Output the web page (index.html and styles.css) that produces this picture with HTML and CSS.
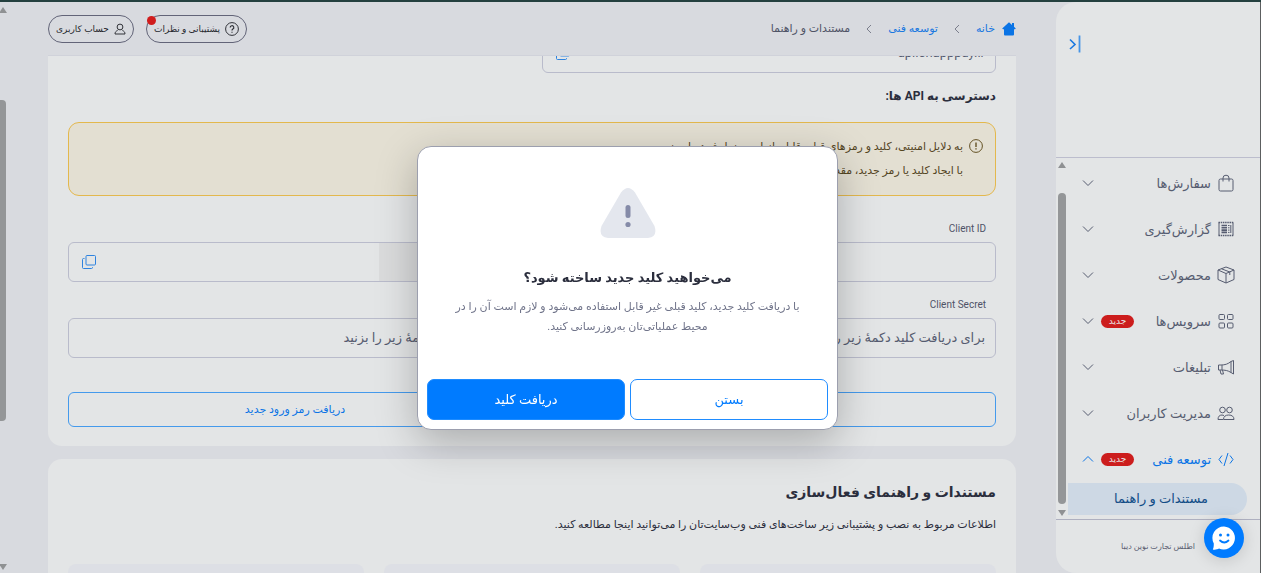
FILE: index.html
```html
<!DOCTYPE html>
<html lang="fa" dir="rtl">
<head>
    <meta charset="UTF-8">
    <meta name="viewport" content="width=device-width, initial-scale=1.0">
    <title>مستندات و راهنما</title>
    <link rel="stylesheet" href="styles.css">
</head>
<body>

<div class="app">
    <aside class="sidebar">
        <div class="sidebar-head">
            <button class="collapse" aria-label="بستن منو">
                <svg width="12" height="18" viewBox="0 0 12 18"><path d="M1 4.500L6 9.500L1 14" fill="none" stroke="#1a78e0" stroke-width="1.600"/><path d="M10.500 0.500V17.500" stroke="#4594e6" stroke-width="1.800"/></svg>
            </button>
        </div>

        <div class="sidebar-body">
            <nav class="menu">
                <a class="menu-item" href="#">
                    <svg class="icon" viewBox="0 0 18 18"><rect x="2" y="5" width="14" height="12" rx="1.500"/><path d="M6 7.500V4a3 2.800 0 0 1 6 0v3.500"/></svg>
                    <span class="menu-text">سفارش‌ها</span>
                    <svg class="chevron" viewBox="0 0 12 8"><path d="M1 1.500L6 6.500L11 1.500"/></svg>
                </a>
                <a class="menu-item" href="#">
                    <svg class="icon" viewBox="0 0 18 18"><path d="M2 2.500V15.500M16 2.500V15.500"/><path d="M1.500 2.500H16.500M1.500 15.500H16.500" stroke-dasharray="1.500 0.700" stroke-width="1.500"/><path d="M4.500 5.500H10M4.500 7.800H10M4.500 10.100H10M4.500 12.400H10" stroke-width="1.600"/><path d="M11 5.500H12.500M11 7.800H12.500M11 10.100H12.500M11 12.400H12.500M13.800 5V13"/></svg>
                    <span class="menu-text">گزارش‌گیری</span>
                    <svg class="chevron" viewBox="0 0 12 8"><path d="M1 1.500L6 6.500L11 1.500"/></svg>
                </a>
                <a class="menu-item" href="#">
                    <svg class="icon" viewBox="0 0 18 18"><path d="M9 1L17 4V13.500L9 17L1 13.500V4ZM1 4L9 7.500L17 4M9 7.500V17M4.500 2.800L12.800 6V9"/></svg>
                    <span class="menu-text">محصولات</span>
                    <svg class="chevron" viewBox="0 0 12 8"><path d="M1 1.500L6 6.500L11 1.500"/></svg>
                </a>
                <a class="menu-item" href="#">
                    <svg class="icon" viewBox="0 0 18 18"><rect x="2" y="2.500" width="5.500" height="5" rx="1"/><rect x="10.500" y="2.500" width="5.500" height="5" rx="1"/><rect x="2" y="11" width="5.500" height="5" rx="1"/><rect x="10.500" y="11" width="5.500" height="5" rx="1"/></svg>
                    <span class="menu-text">سرویس‌ها</span>
                    <span class="tag">جدید</span>
                    <svg class="chevron" viewBox="0 0 12 8"><path d="M1 1.500L6 6.500L11 1.500"/></svg>
                </a>
                <a class="menu-item" href="#">
                    <svg class="icon" viewBox="0 0 18 18"><path d="M14 3.500V14.500M14 3.500L16.500 2.500V16L14 14.500M14 3.500C11 6 8 7 4 7H1.500V12H4C8 12 11 12.500 14 14.500M5 7V12M3 12L4 16H6.500L5.500 12"/></svg>
                    <span class="menu-text">تبلیغات</span>
                    <svg class="chevron" viewBox="0 0 12 8"><path d="M1 1.500L6 6.500L11 1.500"/></svg>
                </a>
                <a class="menu-item" href="#">
                    <svg class="icon" viewBox="0 0 18 18"><circle cx="5.500" cy="6" r="2.800"/><circle cx="12.500" cy="6" r="2.800"/><path d="M1 15.500C1 12.500 2.500 11 5 11L7 11.500M1 15.500H6M6.500 15.500C6.500 12.500 8.500 11 11.700 11S17 12.500 17 15.500Z"/></svg>
                    <span class="menu-text">مدیریت کاربران</span>
                    <svg class="chevron" viewBox="0 0 12 8"><path d="M1 1.500L6 6.500L11 1.500"/></svg>
                </a>
                <a class="menu-item active" href="#">
                    <svg class="icon" viewBox="0 0 18 18"><path d="M5 5.500L2 9.500L5 13.500M13 5.500L16 9.500L13 13.500M11 3L7 16"/></svg>
                    <span class="menu-text">توسعه فنی</span>
                    <span class="tag">جدید</span>
                    <svg class="chevron" viewBox="0 0 12 8"><path d="M1 6.500L6 1.500L11 6.500"/></svg>
                </a>
                <a class="submenu-item" href="#">مستندات و راهنما</a>
            </nav>
            <div class="scrollbar menu-scroll">
                <span class="arrow up"></span>
                <span class="thumb"></span>
                <span class="arrow down"></span>
            </div>
        </div>

        <div class="sidebar-foot">
            <span>اطلس تجارت نوین دیبا</span>
        </div>
    </aside>

    <main class="main">
        <header class="topbar">
            <nav class="breadcrumb">
                <a class="home" href="#">
                    <svg width="14" height="14" viewBox="0 0 14 14"><path d="M7 0.300L0.200 6.500L1 7.300H2V12.500a1 1 0 0 0 1 1H11a1 1 0 0 0 1-1V7.300H13L13.800 6.500L12 4.800V1H10V3Z" fill="#0b74e5"/></svg>
                    <span>خانه</span>
                </a>
                <svg class="sep" viewBox="0 0 6 10"><path d="M5 1L1 5L5 9"/></svg>
                <a href="#">توسعه فنی</a>
                <svg class="sep" viewBox="0 0 6 10"><path d="M5 1L1 5L5 9"/></svg>
                <span>مستندات و راهنما</span>
            </nav>
            <div class="top-actions">
                <button class="pill">
                    <svg width="14" height="14" viewBox="0 0 14 14" fill="none" stroke="#303238"><circle cx="7" cy="7" r="6.400"/><path d="M5.200 5.600a1.800 1.800 0 1 1 2.700 1.500C7.200 7.500 7 7.800 7 8.500M7 9.700V10.800" stroke-width="1.200"/></svg>
                    <span>پشتیبانی و نظرات</span>
                    <span class="dot"></span>
                </button>
                <button class="pill">
                    <svg width="12" height="12" viewBox="0 0 12 12" fill="none" stroke="#303238"><circle cx="6" cy="4" r="2.900"/><path d="M3.600 7.500C2 8 1 9.200 1 11H11C11 9.200 10 8 8.400 7.500"/></svg>
                    <span>حساب کاربری</span>
                </button>
            </div>
        </header>

        <div class="content">
            <section class="card api-card">
                <div class="columns">
                    <div class="field">
                        <input type="text" class="ltr" value="api.snapppay.ir" aria-label="آدرس API" readonly>
                        <button class="copy" aria-label="کپی">
                            <svg width="14" height="14" viewBox="0 0 14 14"><rect x="4" y="0.500" width="9.500" height="9.500" rx="1"/><path d="M2.500 3.500H1.500a1 1 0 0 0-1 1V12.500a1 1 0 0 0 1 1H9.500a1 1 0 0 0 1-1V12"/></svg>
                        </button>
                    </div>
                </div>

                <h3>دسترسی به API ها:</h3>

                <div class="alert">
                    <svg width="14" height="14" viewBox="0 0 14 14" fill="none" stroke="#645124"><circle cx="7" cy="7" r="6.400"/><path d="M7 3.500V8M7 9.300V10.600" stroke-width="1.400"/></svg>
                    <p>به دلایل امنیتی، کلید و رمزهای قبلی قابل بازیابی و نمایش دوباره نیست.<br>با ایجاد کلید یا رمز جدید، مقدار قبلی غیر فعال می‌شود.</p>
                </div>

                <div class="columns">
                    <div class="form-group">
                        <label for="key-id">Client ID</label>
                        <div class="field">
                            <input type="text" id="key-id">
                            <button class="copy" aria-label="کپی">
                                <svg width="14" height="14" viewBox="0 0 14 14"><rect x="4" y="0.500" width="9.500" height="9.500" rx="1"/><path d="M2.500 3.500H1.500a1 1 0 0 0-1 1V12.500a1 1 0 0 0 1 1H9.500a1 1 0 0 0 1-1V12"/></svg>
                            </button>
                        </div>
                        <label for="key-secret">Client Secret</label>
                        <div class="field">
                            <input type="text" id="key-secret" placeholder="برای دریافت کلید دکمهٔ زیر را بزنید">
                        </div>
                        <button class="btn-outline">دریافت کلید جدید</button>
                    </div>
                    <div class="form-group">
                        <label for="user-name">Username</label>
                        <div class="field">
                            <input type="text" id="user-name" class="masked">
                            <button class="copy" aria-label="کپی">
                                <svg width="14" height="14" viewBox="0 0 14 14"><rect x="4" y="0.500" width="9.500" height="9.500" rx="1"/><path d="M2.500 3.500H1.500a1 1 0 0 0-1 1V12.500a1 1 0 0 0 1 1H9.500a1 1 0 0 0 1-1V12"/></svg>
                            </button>
                        </div>
                        <label for="user-pass">Password</label>
                        <div class="field">
                            <input type="text" id="user-pass" placeholder="برای ورود رمز دکمهٔ زیر را بزنید">
                        </div>
                        <button class="btn-outline">دریافت رمز ورود جدید</button>
                    </div>
                </div>
            </section>

            <section class="card docs-card">
                <h2>مستندات و راهنمای فعال‌سازی</h2>
                <p>اطلاعات مربوط به نصب و پشتیبانی زیر ساخت‌های فنی وب‌سایت‌تان را می‌توانید اینجا مطالعه کنید.</p>
                <div class="tiles">
                    <div class="tile"></div>
                    <div class="tile"></div>
                    <div class="tile"></div>
                </div>
            </section>
        </div>
    </main>

    <div class="scrollbar page-scroll">
        <span class="arrow up"></span>
        <span class="thumb"></span>
        <span class="arrow down"></span>
    </div>
</div>

<div class="overlay">
    <div class="modal" role="dialog" aria-labelledby="modal-title">
        <svg class="warning" width="56" height="50" viewBox="0 0 56 50"><path d="M21 4.500Q28 -4.500 35 4.500L54.500 38Q58 49 48 50H8Q-2 49 1.500 38Z" fill="#e4e7ee"/><rect x="25.500" y="17" width="5" height="13" rx="2.500" fill="#858ba8"/><circle cx="28" cy="36.500" r="2.600" fill="#858ba8"/></svg>
        <h2 id="modal-title">می‌خواهید کلید جدید ساخته شود؟</h2>
        <p>با دریافت کلید جدید، کلید قبلی غیر قابل استفاده می‌شود و لازم است آن را در<br>محیط عملیاتی‌تان به‌روزرسانی کنید.</p>
        <div class="modal-actions">
            <button class="close">بستن</button>
            <button class="confirm">دریافت کلید</button>
        </div>
    </div>
</div>

<button class="chat" aria-label="گفتگو">
    <svg width="24" height="24" viewBox="0 0 24 24"><path d="M12 0.500A11.500 11.500 0 1 1 7 22.600C5.500 23.400 3 24 0.800 23.500C1.600 22 1.800 20 1.800 17.500A11.500 11.500 0 0 1 12 0.500Z" fill="#fff"/><circle cx="8.500" cy="9" r="1.500" fill="#007bff"/><circle cx="16" cy="9" r="1.500" fill="#007bff"/><path d="M8 14.500Q12.200 18.500 16.500 14.500" fill="none" stroke="#007bff" stroke-width="1.800" stroke-linecap="round"/></svg>
</button>

</body>
</html>
```

FILE: styles.css
```css
* {
    box-sizing: border-box;
}
body {
    font-family: Roboto, "DejaVu Sans", sans-serif;
    margin: 0;
    font-size: 11px;
    color: #2b2e3d;
    background: #d8dadf;
}
h2, h3, p {
    margin: 0;
}
a {
    color: #1a78e0;
    text-decoration: none;
}
button, input {
    font-family: inherit;
    padding: 0;
    border: none;
    background: transparent;
}
button {
    cursor: pointer;
}
.app {
    display: flex;
    height: 100vh;
    border-top: 2px solid #24403f;
    overflow: hidden;
}

/* sidebar */
.sidebar {
    display: flex;
    flex-direction: column;
    flex: 0 0 205px;
    background: #e3e5e6;
    border-right: 1px solid #5c5f60;
    border-radius: 20px 0 0 20px;
}
.sidebar-head {
    height: 156px;
    padding: 33px 13px;
    border-bottom: 1px solid #bcbdcd;
    text-align: left;
}
.collapse svg {
    display: block;
}
.sidebar-body {
    display: flex;
    flex: 1;
    min-height: 0;
}
.menu {
    flex: 1;
    padding-top: 2px;
}
.menu-item {
    display: flex;
    align-items: center;
    height: 46px;
    padding: 0 25px 0 14px;
    color: #565c70;
}
.menu-item.active {
    color: #0b74e5;
}
.menu-text {
    margin-right: 6px;
    font-size: 13px;
}
.icon {
    width: 18px;
    height: 18px;
    fill: none;
    stroke: currentColor;
}
.chevron {
    width: 12px;
    height: 8px;
    margin-right: auto;
    fill: none;
    stroke: currentColor;
}
.tag {
    margin-right: auto;
    width: 33px;
    line-height: 13px;
    border-radius: 7px;
    background: #cc1d1d;
    color: #e8e4e5;
    font-size: 9px;
    text-align: center;
}
.tag + .chevron {
    margin-right: 7px;
}
.submenu-item {
    display: block;
    margin: 1px 13px 0 0;
    padding-right: 39px;
    line-height: 32px;
    border-radius: 0 16px 16px 0;
    background: #cdd8e4;
    color: #124d87;
    font-size: 13px;
    font-weight: 500;
}
.sidebar-foot {
    display: flex;
    align-items: center;
    height: 54px;
    padding-right: 65px;
    border-top: 1px solid #aeb0c0;
    color: #5c6072;
    font-size: 8px;
}

/* scrollbars */
.scrollbar {
    display: flex;
    flex-direction: column;
    align-items: center;
}
.menu-scroll {
    width: 12px;
    padding: 4px 2px 3px;
}
.page-scroll {
    width: 6px;
    padding: 5px 0 3px;
}
.thumb {
    width: 100%;
    border-radius: 4px;
    background: #949698;
}
.menu-scroll .thumb {
    flex: 1;
    margin: 25px 0 6px;
}
.page-scroll .thumb {
    height: 56vh;
    margin: 87px 0 auto;
    border-radius: 0 4px 4px 0;
}
.arrow {
    border: 4px solid transparent;
}
.arrow.up {
    border-top: 0;
    border-bottom: 6px solid #8f9193;
}
.arrow.down {
    border-bottom: 0;
    border-top: 6px solid #8f9193;
}

/* main */
.main {
    flex: 1;
    min-width: 0;
    display: flex;
    flex-direction: column;
    padding: 0 40px 0 42px;
}
.topbar {
    display: flex;
    justify-content: space-between;
    align-items: center;
    height: 54px;
    border-bottom: 1px solid #d0d2da;
}
.breadcrumb {
    display: flex;
    align-items: center;
    gap: 16px;
    color: #4f5366;
}
.home {
    display: flex;
    align-items: center;
    gap: 7px;
}
.sep {
    width: 6px;
    height: 10px;
    fill: none;
    stroke: #7b7e8c;
}
.top-actions {
    display: flex;
    gap: 12px;
}
.pill {
    position: relative;
    display: flex;
    align-items: center;
    gap: 5px;
    height: 28px;
    padding: 0 7px;
    border: 1px solid #626478;
    border-radius: 14px;
    color: #26282e;
    font-size: 9px;
    font-weight: 500;
}
.dot {
    position: absolute;
    top: 0;
    left: 0;
    width: 9px;
    height: 9px;
    border-radius: 50%;
    background: #d01c1c;
}
.content {
    flex: 1;
    min-height: 0;
    overflow: hidden;
}
.card {
    padding: 0 20px;
    border-radius: 14px;
    background: #e3e5e6;
}
.api-card {
    margin: -23px 0 13px;
    padding-bottom: 19px;
}
.api-card h3 {
    margin: 11px 0 13px;
    font-size: 12px;
    line-height: 25px;
}
.columns {
    display: grid;
    grid-template-columns: 1fr 1fr;
    gap: 20px;
}
.field {
    display: flex;
    align-items: center;
    justify-content: space-between;
    height: 40px;
    padding: 0 10px 0 13px;
    border: 1px solid #b9bbcb;
    border-radius: 6px;
}
.field input {
    flex: 1;
    min-width: 0;
    height: 100%;
    padding-bottom: 2px;
    color: #565c70;
    font-size: 13px;
    outline: none;
}
.field input::placeholder {
    color: #565c70;
}
.field .ltr {
    direction: ltr;
    text-align: right;
}
.field .masked {
    flex: 0 0 132px;
    background: #dadbdc;
}
.copy svg {
    display: block;
    fill: none;
    stroke: #2f83df;
}
.alert {
    display: flex;
    gap: 6px;
    padding: 12px;
    border: 1px solid #e3b84d;
    border-radius: 11px;
    background: #e3dfd2;
    color: #54451f;
}
.alert svg {
    margin-top: 4px;
}
.alert p {
    line-height: 24px;
}
.form-group {
    display: flex;
    flex-direction: column;
    padding-top: 24px;
}
.form-group label {
    margin-bottom: 4px;
    padding-right: 10px;
    line-height: 18px;
    color: #4f5366;
    font-size: 10px;
}
.form-group .field {
    margin-bottom: 14px;
}
.btn-outline {
    height: 35px;
    margin-top: 20px;
    border: 1px solid #459aec;
    border-radius: 6px;
    color: #0b74e5;
    font-size: 11px;
}
.docs-card {
    padding-top: 20px;
}
.docs-card h2 {
    font-size: 14px;
    line-height: 26px;
}
.docs-card p {
    margin: 9px 0 28px;
    line-height: 22px;
}
.tiles {
    display: grid;
    grid-template-columns: repeat(3, 1fr);
    gap: 20px;
}
.tile {
    height: 120px;
    border-radius: 8px;
    background: #dddfe5;
}

/* modal */
.overlay {
    position: fixed;
    inset: 2px 6px 0 0;
    display: flex;
    align-items: center;
    justify-content: center;
}
.modal {
    display: flex;
    flex-direction: column;
    align-items: center;
    width: 421px;
    padding: 41px 9px 9px;
    border: 1px solid #9c9fae;
    border-radius: 14px;
    background: #fff;
    box-shadow: 0 12px 40px rgba(0, 0, 0, 0.25);
    text-align: center;
}
.modal h2 {
    margin-top: 26px;
    font-size: 13px;
    line-height: 28px;
}
.modal p {
    margin: 5px 0 42px;
    color: #70748a;
    line-height: 20px;
}
.modal-actions {
    display: grid;
    grid-template-columns: 1fr 1fr;
    gap: 5px;
    width: 100%;
}
.modal-actions button {
    height: 41px;
    border: 1px solid #1f8cff;
    border-radius: 7px;
    font-size: 13px;
    font-weight: 500;
}
.close {
    color: #007bff;
}
.confirm {
    background: #007bff;
    color: #fff;
}

.chat {
    position: fixed;
    right: 17px;
    bottom: 15px;
    display: flex;
    align-items: center;
    justify-content: center;
    width: 40px;
    height: 40px;
    border-radius: 50%;
    background: #007bff;
    box-shadow: 0 2px 16px rgba(0, 0, 0, 0.15);
}
```
